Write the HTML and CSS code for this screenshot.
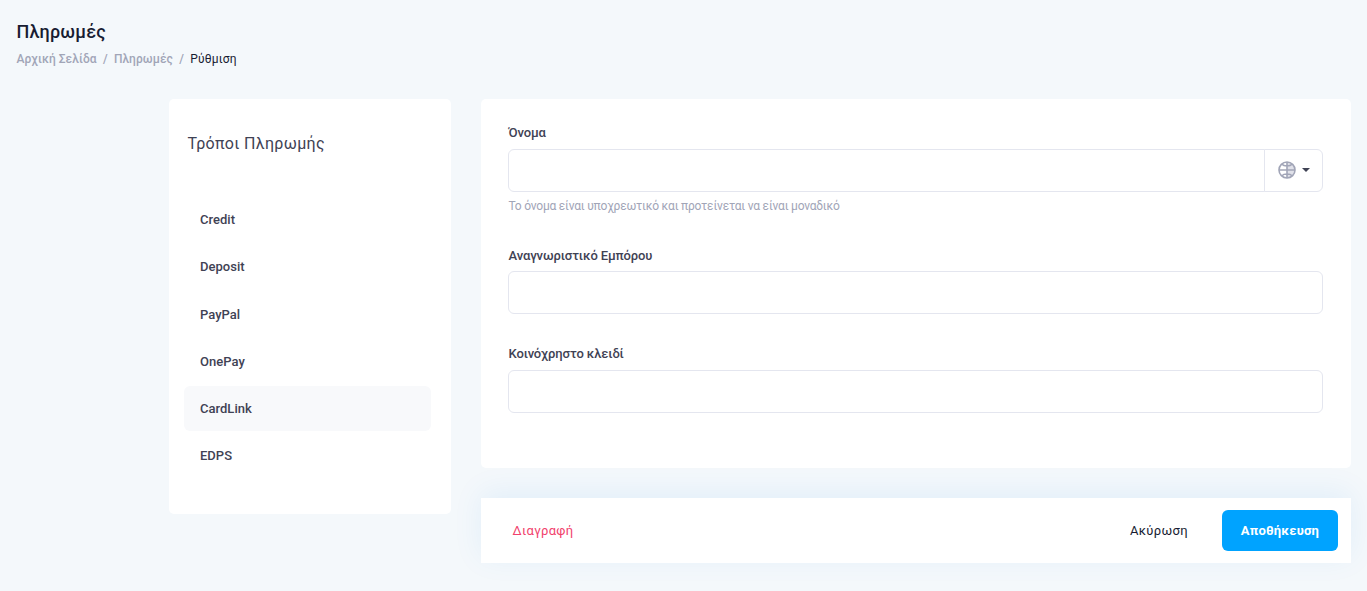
FILE: index.html
```html
<!DOCTYPE html>
<html lang="el">
<head>
<meta charset="utf-8">
<title>Πληρωμές</title>
<link rel="stylesheet" href="styles.css">
</head>
<body>
<header class="page-header">
  <h1 class="page-title">Πληρωμές</h1>
  <nav class="breadcrumb">
    <a class="crumb crumb-home">Αρχική Σελίδα</a><span class="separator">/</span><a class="crumb crumb-section">Πληρωμές</a><span class="separator">/</span><span class="crumb current">Ρύθμιση</span>
  </nav>
</header>
<main class="layout">
  <aside class="card sidebar">
    <h2 class="sidebar-title"><span>Τρόποι Πληρωμής</span></h2>
    <ul class="methods">
      <li class="method"><span>Credit</span></li>
      <li class="method"><span>Deposit</span></li>
      <li class="method"><span>PayPal</span></li>
      <li class="method"><span>OnePay</span></li>
      <li class="method active"><span>CardLink</span></li>
      <li class="method"><span>EDPS</span></li>
    </ul>
  </aside>
  <form class="content">
    <section class="card fields">
      <div class="field field-name">
        <label class="label" for="name">Όνομα</label>
        <div class="input-group">
          <input class="input" id="name" type="text">
          <button class="language" type="button" aria-label="Γλώσσα">
            <svg class="globe" viewBox="0 0 18 18" fill="none">
              <path d="M9 1a8 8 0 0 1 0 16Z" fill="#e0e1e9"/>
              <g stroke="#a1a5b7" stroke-width="1.6">
                <circle cx="9" cy="9" r="8"/>
                <path d="M9 1v16M1 9h16M4 3.2C5.8 5.6 12.2 5.6 14 3.2M4 14.8C5.8 12.4 12.2 12.4 14 14.8"/>
              </g>
            </svg>
            <span class="caret"></span>
          </button>
        </div>
        <p class="help"><span>Το όνομα είναι υποχρεωτικό και προτείνεται να είναι μοναδικό</span></p>
      </div>
      <div class="field field-merchant">
        <label class="label" for="merchant">Αναγνωριστικό Εμπόρου</label>
        <input class="input" id="merchant" type="text">
      </div>
      <div class="field">
        <label class="label" for="secret">Κοινόχρηστο κλειδί</label>
        <input class="input" id="secret" type="text">
      </div>
    </section>
    <footer class="actions">
      <button class="button delete" type="button">Διαγραφή</button>
      <button class="button cancel" type="button">Ακύρωση</button>
      <button class="button save" type="submit">Αποθήκευση</button>
    </footer>
  </form>
</main>
</body>
</html>
```
FILE: styles.css
```css
* { box-sizing: border-box; }

body {
  margin: 0;
  height: 591px;
  overflow: hidden;
  background: #f4f8fb;
  color: #3f4254;
  font-family: Roboto, "Liberation Sans", sans-serif;
  font-size: 13px;
  font-weight: 500;
}

.page-header { height: 99px; padding: 20px 16.5px 0; }
.page-title { margin: 0; color: #181c32; font-size: 18px; font-weight: 500; line-height: 24px; letter-spacing: .2px; }
.breadcrumb { display: flex; margin-top: 6px; color: #a1a5b7; font-size: 12px; line-height: 18px; }
.crumb { letter-spacing: .05px; }
.separator { margin: 0 6.3px; }
.current { color: #181c32; font-weight: 400; letter-spacing: .22px; }

.layout { display: flex; align-items: flex-start; gap: 30px; padding: 0 16px 0 169px; }
.card { background: #fff; border-radius: 5px; }

.sidebar { flex: none; width: 282px; height: 415px; padding: 33px 20px 0 15px; }
.sidebar-title { margin: 0 0 41px; padding-left: 3.5px; font-size: 16px; font-weight: 400; line-height: 24px; letter-spacing: .31px; }
.methods { display: flex; flex-direction: column; gap: 2.25px; margin: 0; padding: 0; list-style: none; }
.method { display: flex; align-items: center; height: 45px; padding-left: 16px; border-radius: 6px; letter-spacing: .02px; }
.active { background: #f8f9fb; }

.content { flex: 1; display: flex; flex-direction: column; gap: 30px; }
.fields { height: 369px; padding: 24px 28px 0 27px; }
.label { display: block; height: 26px; padding-left: .5px; line-height: 20px; letter-spacing: -.12px; }
.field-name { height: 123px; }
.field-merchant { height: 98px; }
.field-merchant .label { height: 25px; }
.input {
  display: block;
  width: 100%;
  height: 43px;
  padding: 0 12px;
  border: 1px solid #e4e6ef;
  border-radius: 6px;
  background: #fff;
  font: inherit;
  outline: 0;
}
.input-group { display: flex; }
.input-group .input { flex: 1; border-radius: 6px 0 0 6px; }
.language {
  display: flex;
  align-items: center;
  width: 59px;
  padding: 0 0 1px 13px;
  border: 1px solid #e4e6ef;
  border-radius: 0 6px 6px 0;
  margin-left: -1px;
  background: #fff;
}
.globe { width: 18px; height: 18px; }
.caret { margin-left: 6px; border: 4px solid transparent; border-top-color: #3f4254; border-bottom: 0; }
.help { margin: 4px 0 0; padding-left: .5px; color: #a1a5b7; font-size: 12px; font-weight: 400; line-height: 20px; letter-spacing: -.22px; }

.actions {
  display: flex;
  align-items: center;
  height: 65px;
  padding: 0 13px 0 31.5px;
  background: #fff;
  box-shadow: 0 -6px 30px rgba(0, 130, 230, .08);
}
.button { padding: 0; border: 0; background: none; color: #181c32; font: inherit; font-weight: 400; letter-spacing: .35px; }
.delete { margin-right: auto; color: #f1416c; }
.cancel { margin-right: 34px; }
.save { width: 116px; height: 41px; border-radius: 6px; background: #00a3ff; color: #fff; font-weight: 700; letter-spacing: .2px; }
```
